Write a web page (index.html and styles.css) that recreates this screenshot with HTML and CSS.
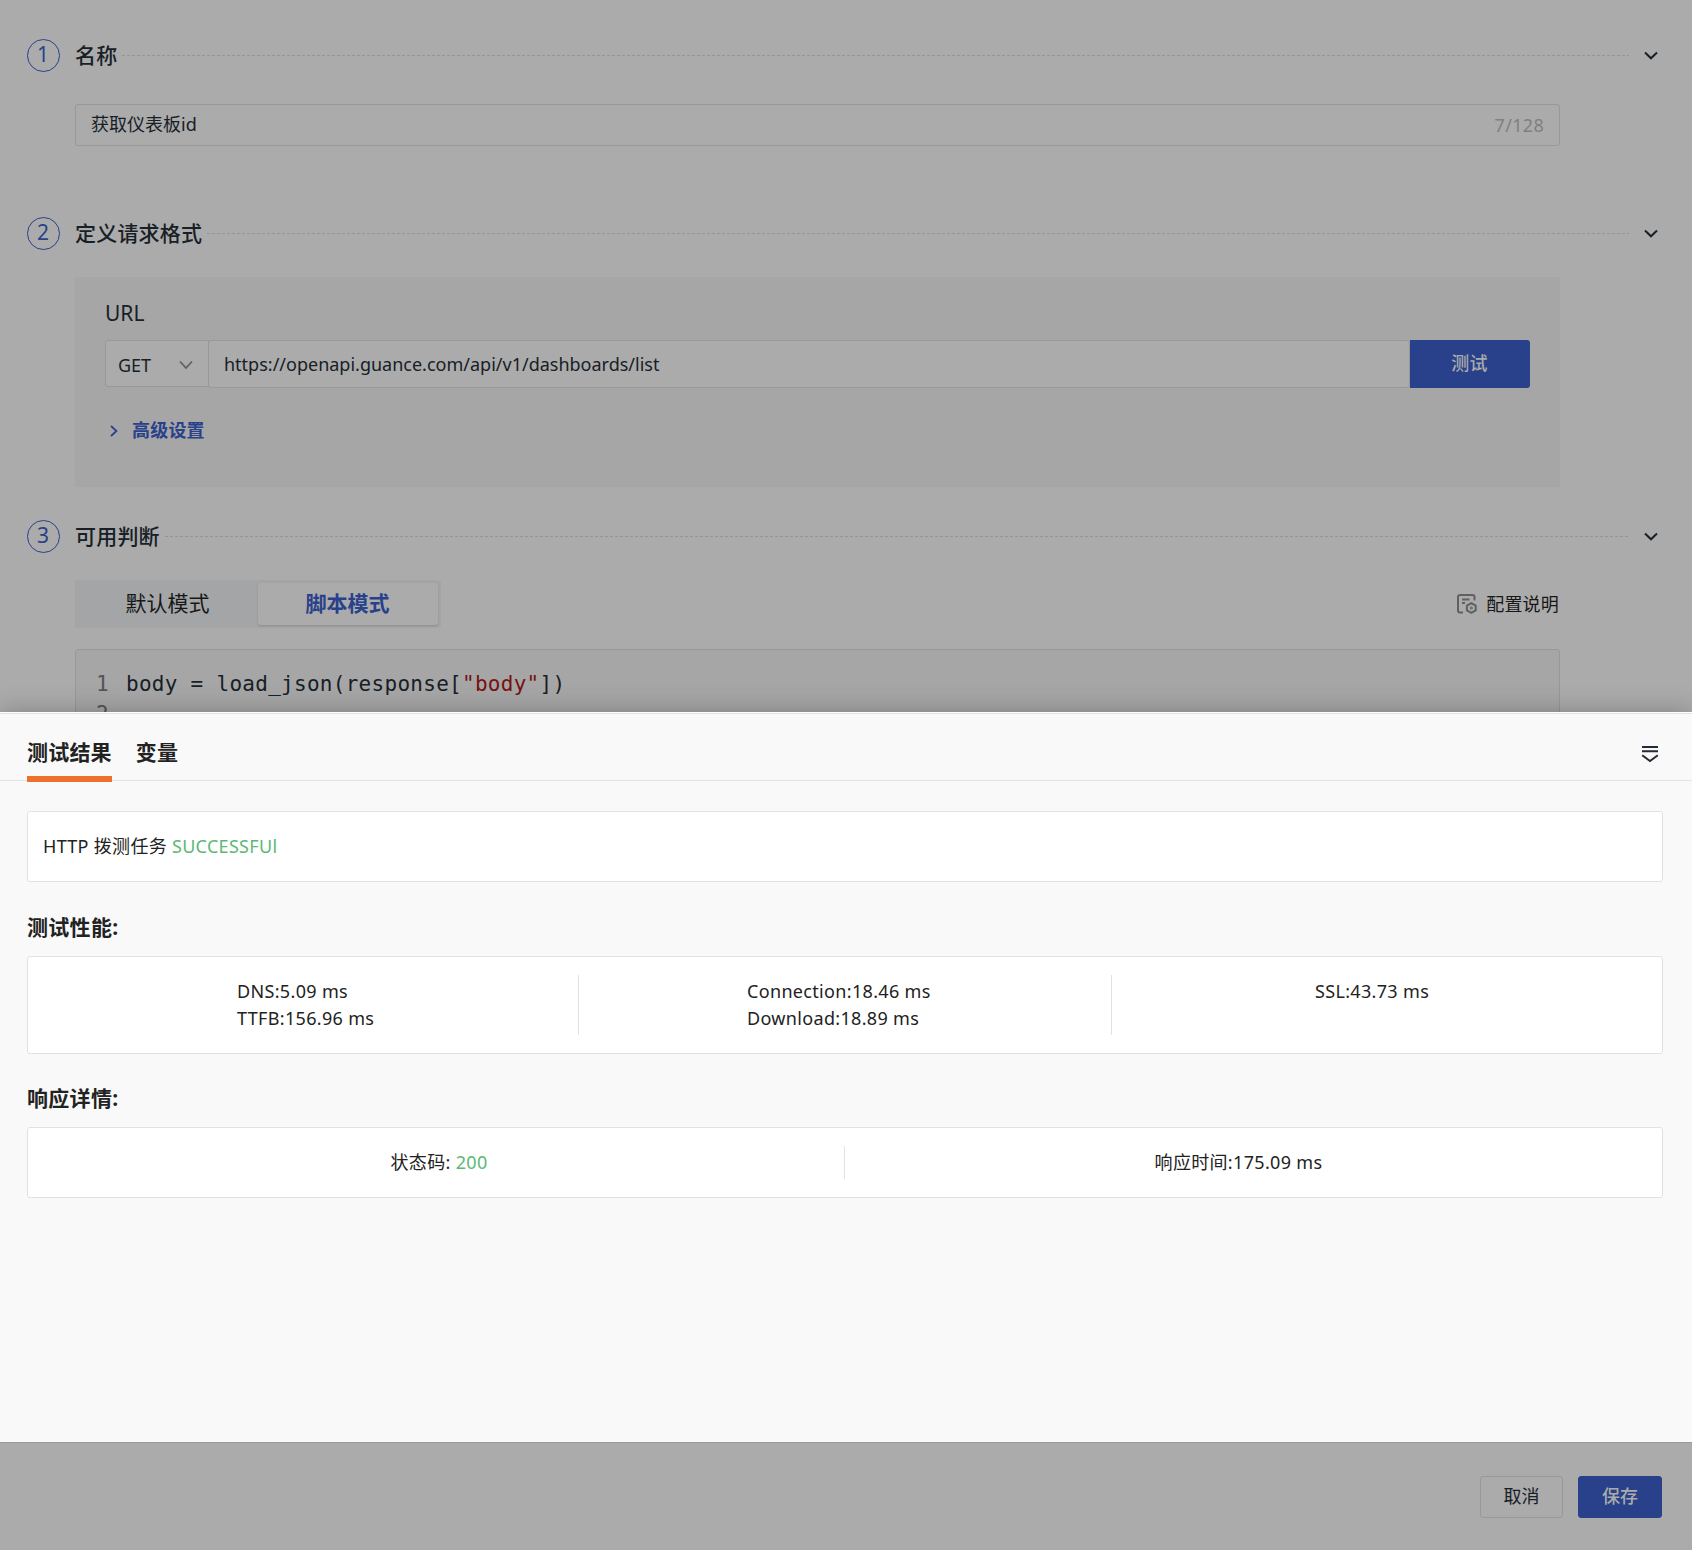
FILE: index.html
```html
<!DOCTYPE html>
<html lang="zh-CN">
<head>
    <meta charset="UTF-8">
    <meta name="viewport" content="width=device-width, initial-scale=1.0">
    <title>获取仪表板id</title>
    <link rel="stylesheet" href="styles.css">
</head>
<body>
    <main class="form-page">
        <!-- 名称 -->
        <section class="step step-name">
            <header class="step-header">
                <span class="step-number">1</span>
                <h2>名称</h2>
                <span class="step-line"></span>
                <svg class="step-arrow" width="14" height="10" viewBox="0 0 14 10"><path d="M1 1.500 7 7.300l6-5.800"/></svg>
            </header>
            <div class="name-input">
                <span class="name-value">获取仪表板id</span>
                <span class="counter">7/128</span>
            </div>
        </section>
        <!-- 定义请求格式 -->
        <section class="step step-request">
            <header class="step-header">
                <span class="step-number">2</span>
                <h2>定义请求格式</h2>
                <span class="step-line"></span>
                <svg class="step-arrow" width="14" height="10" viewBox="0 0 14 10"><path d="M1 1.500 7 7.300l6-5.800"/></svg>
            </header>
            <div class="request-panel">
                <label class="url-label">URL</label>
                <div class="url-row">
                    <div class="method-select">
                        <span>GET</span>
                        <svg width="14" height="10" viewBox="0 0 14 10"><path d="M1 1.500 7 8l6-6.500"/></svg>
                    </div>
                    <div class="url-input">https://openapi.guance.com/api/v1/dashboards/list</div>
                    <button class="btn-test">测试</button>
                </div>
                <a class="advanced">
                    <svg width="8" height="12" viewBox="0 0 8 12"><path d="M1 1l5.500 5L1 11"/></svg>
                    <span>高级设置</span>
                </a>
            </div>
        </section>
        <!-- 可用判断 -->
        <section class="step step-judge">
            <header class="step-header">
                <span class="step-number">3</span>
                <h2>可用判断</h2>
                <span class="step-line"></span>
                <svg class="step-arrow" width="14" height="10" viewBox="0 0 14 10"><path d="M1 1.500 7 7.300l6-5.800"/></svg>
            </header>
            <div class="mode-row">
                <div class="mode-switch">
                    <span class="mode">默认模式</span>
                    <span class="mode active">脚本模式</span>
                </div>
                <a class="config-doc">
                    <svg width="20" height="20" viewBox="0 0 20 20">
                        <path d="M6 18.500H3A2 2 0 0 1 1 16.500V3A2 2 0 0 1 3 1H15.500A2 2 0 0 1 17.500 3V6.500M5 5.500H12.500M5 9H8"/>
                        <path d="M14.300 9.200l4.400 2.500v4.600l-4.400 2.500l-4.400-2.500v-4.600z"/>
                        <circle cx="14.300" cy="14" r="0.500"/>
                    </svg>
                    <span>配置说明</span>
                </a>
            </div>
            <div class="editor">
                <div class="code-line"><span class="line-no">1</span><code>body = load_json(response[<span class="str">"body"</span>])</code></div>
                <div class="code-line"><span class="line-no">2</span><code></code></div>
            </div>
        </section>
    </main>

    <!-- 测试结果抽屉 -->
    <section class="drawer">
        <header class="drawer-header">
            <nav class="tabs">
                <span class="tab active">测试结果</span>
                <span class="tab">变量</span>
            </nav>
            <svg class="collapse" width="18" height="18" viewBox="0 0 18 18"><path d="M1 2H17M1 6.300H17M1.200 10.200 9 16l7.800-5.800"/></svg>
        </header>
        <div class="drawer-body">
            <div class="card task-card">HTTP 拨测任务 <span class="ok">SUCCESSFUl</span></div>
            <h3>测试性能:</h3>
            <div class="card perf-card">
                <div class="cell cell-first"><p>DNS:5.09 ms</p><p>TTFB:156.96 ms</p></div>
                <div class="cell cell-second"><p>Connection:18.46 ms</p><p>Download:18.89 ms</p></div>
                <div class="cell cell-third"><p>SSL:43.73 ms</p></div>
            </div>
            <h3 class="response-title">响应详情:</h3>
            <div class="card response-card">
                <div class="cell cell-status">状态码:&nbsp;<span class="ok">200</span></div>
                <div class="cell cell-time">响应时间:175.09 ms</div>
            </div>
        </div>
    </section>

    <footer class="form-footer">
        <button class="btn btn-cancel">取消</button>
        <button class="btn btn-primary">保存</button>
    </footer>
</body>
</html>
```
FILE: styles.css
```css
* {
    box-sizing: border-box;
}
body {
    margin: 0;
    height: 1550px;
    display: flex;
    flex-direction: column;
    overflow: hidden;
    background-color: #ababab;
    color: #172026;
    font-family: "Noto Sans", "Noto Sans CJK SC", sans-serif;
    font-size: 18px;
}
h2, h3, p {
    margin: 0;
}
svg {
    fill: none;
    stroke: currentColor;
    stroke-width: 2;
    flex: none;
}
button {
    font: inherit;
    padding: 0;
}
.form-page {
    height: 712px;
    padding: 39px 34px 0 27px;
    overflow: hidden;
}
.step-header {
    display: flex;
    align-items: center;
    height: 33px;
}
.step-number {
    width: 33px;
    height: 33px;
    padding-right: 1px;
    border: 1px solid #28418a;
    border-radius: 50%;
    color: #28418a;
    font-size: 21px;
    line-height: 29px;
    text-align: center;
}
.step-header h2 {
    margin-left: 15px;
    font-size: 21px;
    font-weight: 500;
    line-height: 32px;
    height: 33px;
    letter-spacing: 0.2px;
}
.step-line {
    flex: 1;
    height: 1px;
    margin: 0 15px 0 5px;
    background: repeating-linear-gradient(90deg, #949494 0 3px, transparent 3px 5px);
}
.name-input {
    display: flex;
    justify-content: space-between;
    align-items: center;
    width: 1485px;
    height: 42px;
    margin: 32px 0 71px 48px;
    padding: 0 15px;
    border: 1px solid #989898;
    border-radius: 3px;
}
.name-value {
    padding-bottom: 4px;
}
.counter {
    color: #808080;
    letter-spacing: 0.3px;
}
.request-panel {
    width: 1485px;
    height: 210px;
    margin: 27px 0 33px 48px;
    padding: 20px 30px;
    background-color: #a6a6a6;
}
.url-label {
    display: block;
    height: 43px;
    font-size: 21px;
    line-height: 32px;
}
.url-row {
    display: flex;
    align-items: flex-start;
}
.method-select {
    display: flex;
    justify-content: space-between;
    align-items: center;
    width: 104px;
    height: 47px;
    margin-right: -1px;
    padding: 2px 15px 0 12px;
    border: 1px solid #97979d;
    border-radius: 3px 0 0 3px;
    background-color: #ababab;
}
.method-select svg {
    color: #5d6164;
    stroke-width: 1.8;
}
.url-input {
    flex: 1;
    height: 48px;
    padding-left: 15px;
    border: 1px solid #97979d;
    border-radius: 3px;
    background-color: #ababab;
    line-height: 46px;
}
.btn-test {
    width: 120px;
    height: 48px;
    padding: 0 1px 4px 0;
    border: 0;
    border-radius: 0 3px 3px 0;
    background-color: #28418a;
    color: #ababab;
    font-weight: 500;
    letter-spacing: 0.3px;
}
.advanced {
    display: flex;
    align-items: center;
    gap: 14px;
    margin: 28px 0 0 5px;
    color: #28418a;
    font-weight: 700;
    letter-spacing: 0.2px;
}
.advanced span {
    padding-bottom: 3px;
}
.advanced svg {
    stroke-width: 1.7;
}
.mode-row {
    display: flex;
    justify-content: space-between;
    align-items: center;
    width: 1485px;
    margin: 27px 0 21px 48px;
}
.mode-switch {
    display: flex;
    width: 366px;
    height: 48px;
    padding: 3px;
    border-radius: 3px;
    background-color: #a3a5a7;
}
.mode {
    width: 180px;
    height: 42px;
    padding-right: 1px;
    color: #171717;
    font-size: 21px;
    line-height: 41px;
    text-align: center;
}
.mode.active {
    border-radius: 3px;
    background-color: #ababab;
    box-shadow: 0 1px 2px rgba(0, 0, 0, 0.15);
    color: #28418a;
    font-weight: 700;
}
.config-doc {
    display: flex;
    align-items: center;
    gap: 9px;
    padding-right: 1px;
    color: #171717;
    letter-spacing: 0.2px;
}
.config-doc span {
    padding-bottom: 2px;
}
.config-doc svg {
    color: #606060;
}
.editor {
    width: 1485px;
    height: 300px;
    margin-left: 48px;
    padding: 20px 18px;
    border: 1px solid #989898;
    border-radius: 3px;
    background-color: #a6a6a6;
    font-size: 21px;
}
.code-line {
    display: flex;
    height: 30px;
    line-height: 29px;
    font-family: "DejaVu Sans Mono", monospace;
}
.code-line code {
    font-family: inherit;
    letter-spacing: 0.28px;
}
.line-no {
    width: 32px;
    padding-left: 2px;
    color: #555;
}
.str {
    color: #711;
}
.drawer {
    position: relative;
    height: 730px;
    border-top: 1px solid #fff;
    background-color: #f9f9f9;
    box-shadow: 0 0 24px rgba(0, 0, 0, 0.25);
    color: #222;
}
.drawer-header {
    display: flex;
    justify-content: space-between;
    align-items: center;
    height: 68px;
    padding: 0 33px 0 27px;
    border-top: 1px solid #e3e3e3;
    border-bottom: 1px solid #e3e3e3;
}
.tabs {
    display: flex;
    align-self: stretch;
    gap: 24px;
}
.tab {
    height: 68px;
    font-size: 21px;
    font-weight: 700;
    line-height: 77px;
    letter-spacing: 0.2px;
}
.tab.active {
    border-bottom: 6px solid #ed702d;
}
.collapse {
    margin-top: 13px;
    color: #252b33;
}
.drawer-body {
    padding: 30px 29px 0 27px;
}
.card {
    display: flex;
    border: 1px solid #e2e2e2;
    border-radius: 3px;
    background-color: #fff;
    line-height: 27px;
    letter-spacing: 0.33px;
}
.ok {
    color: #5cb874;
}
.task-card {
    height: 71px;
    padding: 21px 15px;
    gap: 5px;
    letter-spacing: 0.3px;
}
.drawer-body h3 {
    margin: 29px 0 13px;
    font-size: 21px;
    font-weight: 700;
    line-height: 32px;
    letter-spacing: 0.3px;
}
.drawer-body .response-title {
    margin-top: 28px;
}
.perf-card {
    height: 98px;
    padding: 18px 0;
}
.cell {
    height: 60px;
    padding-top: 3px;
    border-right: 1px solid #e2e2e2;
}
.cell:last-child {
    border-right: 0;
}
.cell-first {
    width: 551px;
    padding-left: 209px;
}
.cell-second {
    width: 533px;
    padding-left: 168px;
}
.cell-third {
    flex: 1;
    padding-left: 203px;
}
.response-card {
    height: 71px;
    padding: 18px 0;
}
.response-card .cell {
    display: flex;
    justify-content: center;
    height: 33px;
}
.cell-status {
    width: 817px;
    padding-left: 6px;
}
.cell-time {
    flex: 1;
    padding-right: 30px;
}
.form-footer {
    position: relative;
    display: flex;
    justify-content: flex-end;
    gap: 15px;
    height: 108px;
    padding: 33px 30px 0;
    border-top: 1px solid #989898;
    background-color: #ababab;
}
.btn {
    width: 84px;
    height: 42px;
    padding-bottom: 4px;
    border: 1px solid #989898;
    border-radius: 3px;
    background-color: #ababab;
    color: #172026;
}
.btn-cancel {
    width: 83px;
}
.btn-primary {
    border-color: #28418a;
    background-color: #28418a;
    color: #ababab;
    font-weight: 500;
}
```
